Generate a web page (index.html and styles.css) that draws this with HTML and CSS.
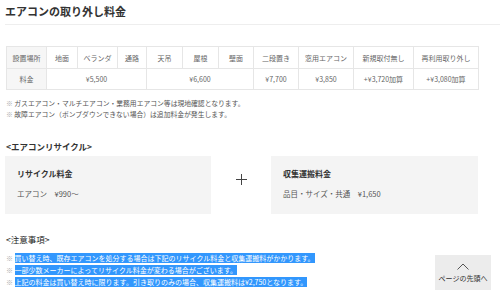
FILE: index.html
```html
<!DOCTYPE html>
<html lang="ja">
<head>
<meta charset="utf-8">
<title>エアコンの取り外し料金</title>
<link rel="stylesheet" href="styles.css">
</head>
<body>
<h1 class="title">エアコンの取り外し料金</h1>

<table class="price">
  <colgroup>
    <col style="width:40px"><col style="width:31px"><col style="width:40px"><col style="width:29px">
    <col style="width:36px"><col style="width:36px"><col style="width:35px"><col style="width:45px">
    <col style="width:55px"><col style="width:60px"><col style="width:65px">
  </colgroup>
  <tr class="row-head">
    <th>設置場所</th><td>地面</td><td>ベランダ</td><td>通路</td><td>天吊</td><td>屋根</td><td>壁面</td><td>二段置き</td><td>窓用エアコン</td><td>新規取付無し</td><td>再利用取り外し</td>
  </tr>
  <tr class="row-price">
    <th>料金</th><td colspan="3">¥5,500</td><td colspan="3">¥6,600</td><td>¥7,700</td><td>¥3,850</td><td>+¥3,720加算</td><td>+¥3,080加算</td>
  </tr>
</table>

<ul class="notes">
  <li><span class="mark">※</span> ガスエアコン・マルチエアコン・業務用エアコン等は現地確認となります。</li>
  <li><span class="mark">※</span> 故障エアコン（ポンプダウンできない場合）は追加料金が発生します。</li>
</ul>

<h2 class="section">&lt;エアコンリサイクル&gt;</h2>
<div class="recycle">
  <div class="card">
    <p class="card-title">リサイクル料金</p>
    <p class="card-text">エアコン　¥990～</p>
  </div>
  <div class="plus">
    <svg width="11" height="11" viewBox="0 0 11 11"><path d="M5.5 0V11M0 5.5H11" stroke="#444" stroke-width="1"/></svg>
  </div>
  <div class="card">
    <p class="card-title">収集運搬料金</p>
    <p class="card-text">品目・サイズ・共通　¥1,650</p>
  </div>
</div>

<h2 class="section section-notes">&lt;注意事項&gt;</h2>
<ul class="notes notes-sel">
  <li><span class="mark">※</span> <span class="sel">買い替え時、既存エアコンを処分する場合は下記のリサイクル料金と収集運搬料がかかります。</span></li>
  <li><span class="mark">※</span> <span class="sel">一部少数メーカーによってリサイクル料金が変わる場合がございます。</span></li>
  <li><span class="mark">※</span> <span class="sel">上記の料金は買い替え時に限ります。引き取りのみの場合、収集運搬料は¥2,750となります。</span></li>
</ul>

<a class="totop" href="#">
  <svg width="12" height="7" viewBox="0 0 12 7"><polyline points="0.5,6.5 6,1 11.5,6.5" fill="none" stroke="#555" stroke-width="1"/></svg>
  <span>ページの先頭へ</span>
</a>
</body>
</html>
```

FILE: styles.css
```css
* { box-sizing: border-box; }
body {
  margin: 0;
  padding: 0;
  font-family: "Noto Sans CJK JP", "Noto Sans", sans-serif;
  color: #555;
  background: #fff;
}
.title {
  margin: 0 0 0 5px;
  padding: 3px 0 5px;
  font-size: 11px;
  line-height: 16px;
  font-weight: bold;
  color: #333;
  border-bottom: 1px solid #eee;
}
.price {
  margin: 21px 0 0 6px;
  width: 472px;
  border-collapse: collapse;
  table-layout: fixed;
  font-size: 7px;
  color: #666;
}
.price th, .price td {
  border: 1px solid #e6e6e6;
  text-align: center;
  font-weight: normal;
  padding: 0;
  white-space: nowrap;
}
.price th { background: #f6f6f6; }
.row-head th, .row-head td { height: 22px; }
.row-price th, .row-price td { height: 21px; }
.notes {
  list-style: none;
  margin: 8px 0 0 6px;
  padding: 0;
  font-size: 6.8px;
  line-height: 11px;
  color: #555;
}
.section {
  margin: 20px 0 4px 6px;
  font-size: 8.5px;
  line-height: 12px;
  font-weight: bold;
  color: #333;
}
.recycle {
  display: grid;
  grid-template-columns: 206px 60px 207px;
  margin-left: 5px;
}
.card {
  background: #f4f4f4;
  padding: 12px 12px 14px;
  height: 58px;
}
.card p { margin: 0; line-height: 12px; color: #555; }
.card-title { font-size: 8px; font-weight: bold; color: #333 !important; margin-bottom: 8px !important; }
.card-text { font-size: 7.5px; }
.plus {
  display: flex;
  align-items: center;
  justify-content: center;
  padding-bottom: 12px;
}
.plus svg { display: block; }
.section-notes {
  margin-top: 19px;
  margin-bottom: 7px;
  font-weight: normal;
  color: #222;
}
.notes-sel {
  margin-top: 0;
  font-size: 7px;
  line-height: 12px;
}
.mark { color: #aaa; }
.sel { background: #3297fd; color: #fff; }
.totop {
  position: fixed;
  right: 9px;
  bottom: 5px;
  width: 56px;
  height: 35px;
  background: #ececec;
  display: flex;
  flex-direction: column;
  align-items: center;
  justify-content: center;
  gap: 4px;
  text-decoration: none;
  color: #333;
  font-size: 7px;
  line-height: 9px;
}
.totop svg { display: block; }
```
